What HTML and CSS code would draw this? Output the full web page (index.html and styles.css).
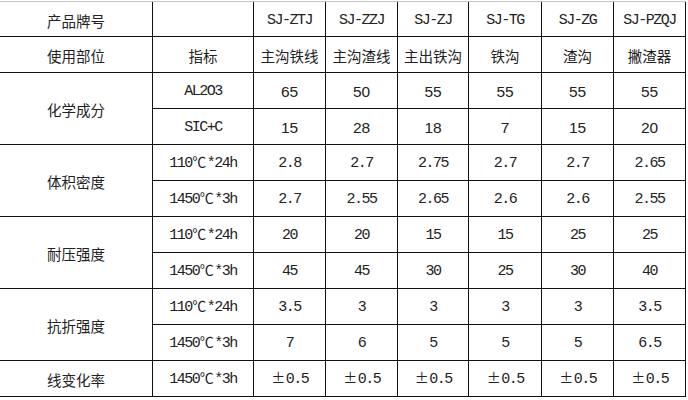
FILE: index.html
```html
<!DOCTYPE html>
<html lang="zh">
<head>
<meta charset="utf-8">
<link rel="stylesheet" href="styles.css">
</head>
<body>
<div class="sheet">
  <div class="c zh">产品牌号</div>
  <div class="c"></div>
  <div class="c mono">SJ-ZTJ</div>
  <div class="c mono">SJ-ZZJ</div>
  <div class="c mono">SJ-ZJ</div>
  <div class="c mono">SJ-TG</div>
  <div class="c mono">SJ-ZG</div>
  <div class="c mono">SJ-PZQJ</div>

  <div class="c zh">使用部位</div>
  <div class="c zh">指标</div>
  <div class="c zh">主沟铁线</div>
  <div class="c zh">主沟渣线</div>
  <div class="c zh">主出铁沟</div>
  <div class="c zh">铁沟</div>
  <div class="c zh">渣沟</div>
  <div class="c zh">撇渣器</div>

  <div class="c zh span2">化学成分</div>
  <div class="c mono">AL2O3</div>
  <div class="c sans">65</div>
  <div class="c sans">50</div>
  <div class="c sans">55</div>
  <div class="c sans">55</div>
  <div class="c sans">55</div>
  <div class="c sans">55</div>
  <div class="c mono">SIC+C</div>
  <div class="c sans">15</div>
  <div class="c sans">28</div>
  <div class="c sans">18</div>
  <div class="c sans">7</div>
  <div class="c sans">15</div>
  <div class="c sans">20</div>

  <div class="c zh span2">体积密度</div>
  <div class="c mono">110<span class="fw">℃</span>*24h</div>
  <div class="c mono">2.8</div>
  <div class="c mono">2.7</div>
  <div class="c mono">2.75</div>
  <div class="c mono">2.7</div>
  <div class="c mono">2.7</div>
  <div class="c mono">2.65</div>
  <div class="c mono">1450<span class="fw">℃</span>*3h</div>
  <div class="c mono">2.7</div>
  <div class="c mono">2.55</div>
  <div class="c mono">2.65</div>
  <div class="c mono">2.6</div>
  <div class="c mono">2.6</div>
  <div class="c mono">2.55</div>

  <div class="c zh span2">耐压强度</div>
  <div class="c mono">110<span class="fw">℃</span>*24h</div>
  <div class="c mono">20</div>
  <div class="c mono">20</div>
  <div class="c mono">15</div>
  <div class="c mono">15</div>
  <div class="c mono">25</div>
  <div class="c mono">25</div>
  <div class="c mono">1450<span class="fw">℃</span>*3h</div>
  <div class="c mono">45</div>
  <div class="c mono">45</div>
  <div class="c mono">30</div>
  <div class="c mono">25</div>
  <div class="c mono">30</div>
  <div class="c mono">40</div>

  <div class="c zh span2">抗折强度</div>
  <div class="c mono">110<span class="fw">℃</span>*24h</div>
  <div class="c mono">3.5</div>
  <div class="c mono">3</div>
  <div class="c mono">3</div>
  <div class="c mono">3</div>
  <div class="c mono">3</div>
  <div class="c mono">3.5</div>
  <div class="c mono">1450<span class="fw">℃</span>*3h</div>
  <div class="c mono">7</div>
  <div class="c mono">6</div>
  <div class="c mono">5</div>
  <div class="c mono">5</div>
  <div class="c mono">5</div>
  <div class="c mono">6.5</div>

  <div class="c zh">线变化率</div>
  <div class="c mono">1450<span class="fw">℃</span>*3h</div>
  <div class="c mono"><span class="fw">±</span>0.5</div>
  <div class="c mono"><span class="fw">±</span>0.5</div>
  <div class="c mono"><span class="fw">±</span>0.5</div>
  <div class="c mono"><span class="fw">±</span>0.5</div>
  <div class="c mono"><span class="fw">±</span>0.5</div>
  <div class="c mono"><span class="fw">±</span>0.5</div>
</div>
</body>
</html>
```

FILE: styles.css
```css
html, body {
  margin: 0;
  padding: 0;
  background: #ffffff;
}

body {
  width: 688px;
  height: 400px;
  overflow: hidden;
  color: #1a1a1a;
  font-family: "Noto Sans CJK SC", sans-serif;
}

.sheet {
  margin-top: 1px;
  border-top: 1px solid #c4c4c4;
  display: grid;
  grid-template-columns: 153px 101px 72px 72px 71px 73px 72px 72px;
  grid-template-rows: 35px repeat(10, 36px);
  width: 686px;
}

.c {
  box-sizing: border-box;
  border-right: 1px solid #111;
  border-bottom: 1px solid #111;
  text-align: center;
  line-height: 38px;
  white-space: nowrap;
  overflow: hidden;
}

.span2 {
  grid-row: span 2;
  line-height: 74px;
}

.zh {
  font-family: "Noto Sans CJK SC", sans-serif;
  font-size: 14.5px;
  font-weight: 400;
  color: #222;
}

.mono {
  font-family: "Liberation Mono", "Noto Sans CJK SC", monospace;
  font-size: 15px;
  letter-spacing: -1.5px;
  color: #222;
}

.fw {
  display: inline-block;
  width: 15px;
  text-align: center;
  letter-spacing: 0;
  font-family: "Noto Sans CJK SC", sans-serif;
  font-size: 14px;
  line-height: 1;
}

.sans {
  font-family: "Liberation Sans", sans-serif;
  font-size: 15.5px;
  color: #222;
}
```
